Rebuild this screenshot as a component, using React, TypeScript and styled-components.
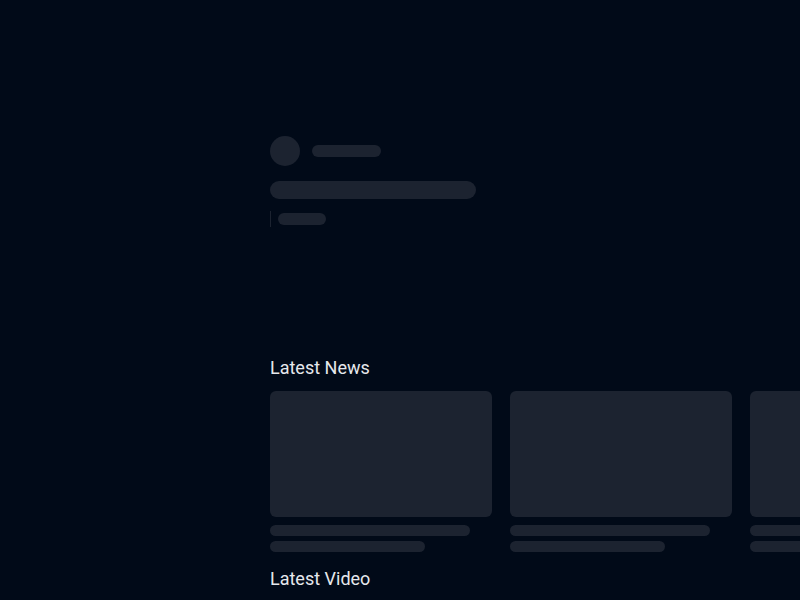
import React from "react";
import styled, { createGlobalStyle } from "styled-components";

const GlobalStyle = createGlobalStyle`
  html, body {
    margin: 0;
    padding: 0;
    background-color: #010a18;
  }
  body {
    font-family: Roboto, "Liberation Sans", sans-serif;
  }
`;

const Page = styled.div`
  width: 800px;
  height: 600px;
  overflow: hidden;
  background-color: #010a18;
  padding-left: 270px;
  box-sizing: border-box;
`;

const Hero = styled.section`
  height: 356px;
  padding-top: 136px;
  box-sizing: border-box;
  display: flex;
  flex-direction: column;
`;

// skeleton bits
const Bone = styled.div<{ w: number; h: number; round?: boolean }>`
  width: ${({ w }) => w}px;
  height: ${({ h }) => h}px;
  border-radius: ${({ round, h }) => (round ? "50%" : `${h / 2}px`)};
  background-color: #1c2330;
  flex-shrink: 0;
`;

const AuthorRow = styled.div`
  display: flex;
  align-items: center;
  gap: 12px;
`;

const MetaRow = styled.div`
  display: flex;
  align-items: center;
  gap: 7px;
  margin-top: 12px;
`;

const Divider = styled.div`
  width: 1px;
  height: 16px;
  background-color: #1c2330;
`;

const TitleBone = styled(Bone)`
  margin-top: 15px;
`;

const Heading = styled.h2`
  margin: 0;
  font-size: 18px;
  line-height: 24px;
  font-weight: 400;
  color: #e6e8ec;
`;

const Row = styled.div`
  display: flex;
  gap: 18px;
  margin-top: 11px;
  margin-bottom: 15px;
`;

const Card = styled.div`
  display: flex;
  flex-direction: column;
  flex-shrink: 0;
  width: 222px;
`;

const Thumb = styled.div`
  height: 126px;
  border-radius: 6px;
  background-color: #1c2330;
  margin-bottom: 8px;
`;

const Lines = styled.div`
  display: flex;
  flex-direction: column;
  gap: 5px;
`;

const App: React.FC = () => {
  const cards = [1, 2, 3];

  return (
    <>
      <GlobalStyle />
      <Page>
        <Hero>
          <AuthorRow>
            <Bone w={30} h={30} round />
            <Bone w={69} h={12} />
          </AuthorRow>
          <TitleBone w={206} h={18} />
          <MetaRow>
            <Divider />
            <Bone w={48} h={12} />
          </MetaRow>
        </Hero>
        <Heading>Latest News</Heading>
        <Row>
          {cards.map((c) => (
            <Card key={c}>
              <Thumb />
              <Lines>
                <Bone w={200} h={11} />
                <Bone w={155} h={11} />
              </Lines>
            </Card>
          ))}
        </Row>
        <Heading>Latest Video</Heading>
      </Page>
    </>
  );
};

export default App;
